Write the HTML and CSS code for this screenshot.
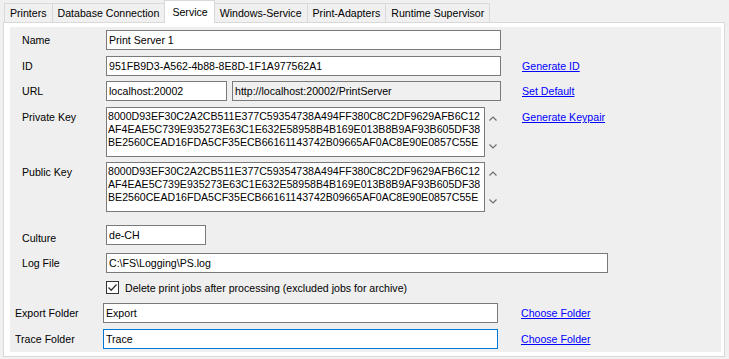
FILE: index.html
```html
<!doctype html>
<html lang="en">
    <head>
        <meta charset="UTF-8">
        <title>Print Server Settings</title>
        <link rel="stylesheet" href="styles.css">
    </head>
    <body>
        <div class="tabs">
            <span class="tab">Printers</span>
            <span class="tab">Database Connection</span>
            <span class="tab active">Service</span>
            <span class="tab">Windows-Service</span>
            <span class="tab">Print-Adapters</span>
            <span class="tab">Runtime Supervisor</span>
        </div>

        <div class="tab-panel">
            <div class="page">
                <div class="row row-name">
                    <label class="caption">Name</label>
                    <input class="field field-wide" type="text" value="Print Server 1">
                </div>

                <div class="row row-id">
                    <label class="caption">ID</label>
                    <input class="field field-wide" type="text" value="951FB9D3-A562-4b88-8E8D-1F1A977562A1">
                    <a class="link" href="#">Generate ID</a>
                </div>

                <div class="row row-url">
                    <label class="caption">URL</label>
                    <input class="field field-host" type="text" value="localhost:20002">
                    <input class="field field-readonly" type="text" value="http://localhost:20002/PrintServer" readonly>
                    <a class="link" href="#">Set Default</a>
                </div>

                <div class="row row-key row-private">
                    <label class="caption">Private Key</label>
                    <div class="keybox">8000D93EF30C2A2CB511E377C59354738A494FF380C8C2DF9629AFB6C12<br>AF4EAE5C739E935273E63C1E632E58958B4B169E013B8B9AF93B605DF38<br>BE2560CEAD16FDA5CF35ECB66161143742B09665AF0AC8E90E0857C55E</div>
                    <div class="scroller">
                        <svg width="8" height="5" viewBox="0 0 8 5"><path d="M0.5 4.5 L4 1 L7.5 4.5" fill="none" stroke="#6d6d6d" stroke-width="1.2"/></svg>
                        <svg width="8" height="5" viewBox="0 0 8 5"><path d="M0.5 0.5 L4 4 L7.5 0.5" fill="none" stroke="#6d6d6d" stroke-width="1.2"/></svg>
                    </div>
                    <a class="link" href="#">Generate Keypair</a>
                </div>

                <div class="row row-key row-public">
                    <label class="caption">Public Key</label>
                    <div class="keybox">8000D93EF30C2A2CB511E377C59354738A494FF380C8C2DF9629AFB6C12<br>AF4EAE5C739E935273E63C1E632E58958B4B169E013B8B9AF93B605DF38<br>BE2560CEAD16FDA5CF35ECB66161143742B09665AF0AC8E90E0857C55E</div>
                    <div class="scroller">
                        <svg width="8" height="5" viewBox="0 0 8 5"><path d="M0.5 4.5 L4 1 L7.5 4.5" fill="none" stroke="#6d6d6d" stroke-width="1.2"/></svg>
                        <svg width="8" height="5" viewBox="0 0 8 5"><path d="M0.5 0.5 L4 4 L7.5 0.5" fill="none" stroke="#6d6d6d" stroke-width="1.2"/></svg>
                    </div>
                </div>

                <div class="row row-culture">
                    <label class="caption caption-low">Culture</label>
                    <input class="field field-culture" type="text" value="de-CH">
                </div>

                <div class="row row-log">
                    <label class="caption">Log File</label>
                    <input class="field field-log" type="text" value="C:\FS\Logging\PS.log">
                </div>

                <div class="row-check">
                    <span class="checkbox">
                        <svg width="11" height="11" viewBox="0 0 11 11"><path d="M1.5 5.5 L4.2 8.2 L9.5 2.5" fill="none" stroke="#333" stroke-width="1.3"/></svg>
                    </span>
                    <span class="check-label">Delete print jobs after processing (excluded jobs for archive)</span>
                </div>

                <div class="row row-folder row-export">
                    <label class="caption">Export Folder</label>
                    <input class="field field-folder" type="text" value="Export">
                    <a class="link" href="#">Choose Folder</a>
                </div>

                <div class="row row-folder row-trace">
                    <label class="caption">Trace Folder</label>
                    <input class="field field-folder field-focus" type="text" value="Trace">
                    <a class="link" href="#">Choose Folder</a>
                </div>
            </div>
        </div>
    </body>
</html>
```

FILE: styles.css
```css
* {
    box-sizing: border-box;
}
html {
    font-family: "Liberation Sans", Arial, sans-serif;
    font-size: 10.6px;
    color: #000;
    background-color: #f0f0f0;
}
body {
    margin: 0;
}

/* Onglets */
.tabs {
    display: flex;
    align-items: flex-end;
    height: 22px;
    padding-left: 4px;
}

.tab {
    height: 19px;
    line-height: 18px;
    padding: 0 5px;
    margin-right: -1px;
    border: 1px solid #d9d9d9;
    border-bottom: none;
    background-color: #f0f0f0;
}

.tab.active {
    position: relative;
    z-index: 1;
    height: 23px;
    line-height: 22px;
    margin-bottom: -1px;
    padding: 0 6px 0 7px;
    background-color: #fff;
}

.tab-panel {
    width: 722px;
    height: 335px;
    margin-left: 3px;
    padding: 4px 3px 4px 6px;
    border: 1px solid #d9d9d9;
    background-color: #fff;
}

.page {
    height: 325px;
    background-color: #efefef;
    padding-top: 3px;
}

/* Lignes du formulaire */
.row {
    display: flex;
    align-items: flex-start;
    padding-left: 12px;
}

.caption {
    width: 84px;
    line-height: 20px;
}

.caption-low {
    padding-top: 3px;
}

.field {
    height: 20px;
    padding: 0 2px;
    border: 1px solid #7a7a7a;
    background-color: #fff;
    font: inherit;
    color: #000;
    outline: none;
}

.field-wide { width: 395px; }
.field-host { width: 121px; margin-right: 5px; }
.field-readonly { width: 269px; background-color: #f0f0f0; }
.field-culture { width: 100px; }
.field-log { width: 502px; }
.field-folder { width: 395px; }
.field-focus { border-color: #0078d7; }

.link {
    margin-left: 21px;
    line-height: 20px;
    color: #0000ff;
}

.row-id { margin-top: 6px; }
.row-url { margin-top: 5px; }
.row-private { margin-top: 6px; }
.row-public { margin-top: 5px; }
.row-culture { margin-top: 13px; }
.row-log { margin-top: 5px; }

/* Zones des clés */
.keybox {
    width: 379px;
    height: 50px;
    padding: 2px 1px;
    border: 1px solid #7a7a7a;
    background-color: #fff;
    line-height: 13px;
    white-space: nowrap;
    overflow: hidden;
}

.scroller {
    width: 16px;
    height: 50px;
    display: flex;
    flex-direction: column;
    align-items: center;
    justify-content: space-between;
    padding: 9px 0 8px;
}

.scroller svg {
    display: block;
}

/* Case à cocher */
.row-check {
    display: flex;
    align-items: center;
    margin-top: 8px;
    padding-left: 96px;
    height: 13px;
}

.checkbox {
    width: 13px;
    height: 13px;
    border: 1px solid #333;
    background-color: #fff;
    display: flex;
    align-items: center;
    justify-content: center;
}

.check-label {
    margin-left: 6px;
}

/* Dossiers */
.row-folder {
    padding-left: 5px;
}

.row-folder .caption {
    width: 88px;
}

.row-folder .link {
    margin-left: 23px;
}

.row-export { margin-top: 9px; }
.row-trace { margin-top: 6px; }
```
